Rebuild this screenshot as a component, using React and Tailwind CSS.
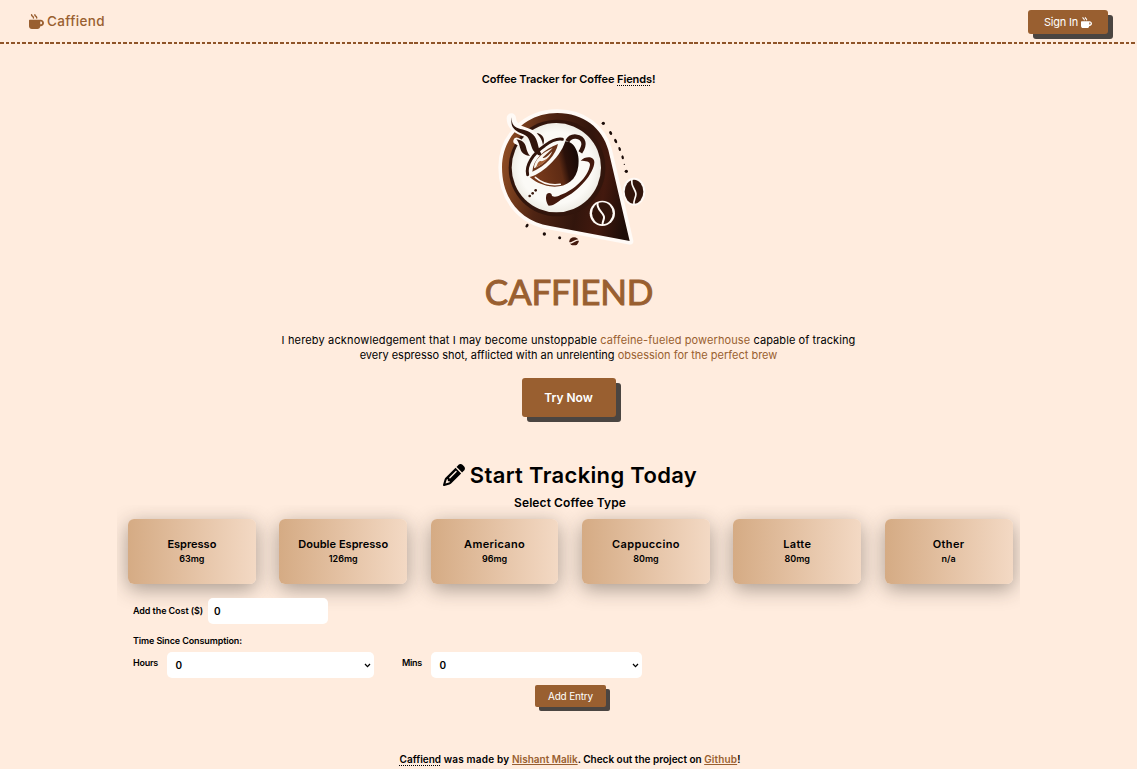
import { FaMugHot, FaPencil } from 'react-icons/fa6';

const coffees = [
  { name: 'Espresso', amount: '63mg', track: 'tracking-[0px]' },
  { name: 'Double Espresso', amount: '126mg', track: 'tracking-[0.04px]' },
  { name: 'Americano', amount: '96mg', track: 'tracking-[0.33px]' },
  { name: 'Cappuccino', amount: '80mg', track: 'tracking-[0.4px]' },
  { name: 'Latte', amount: '80mg', track: 'tracking-[0.33px]' },
  { name: 'Other', amount: 'n/a', track: 'tracking-[0.4px]' },
];

function Logo() {
  return (
    <svg className="h-[150px] w-[160px]" viewBox="60 120 480 450" fill="none">
      <defs>
        <linearGradient id="drop" x1="95" y1="330" x2="480" y2="400" gradientUnits="userSpaceOnUse">
          <stop offset="0" stopColor="#8b4a22" />
          <stop offset="0.3" stopColor="#4f2413" />
          <stop offset="0.62" stopColor="#32150c" />
          <stop offset="0.8" stopColor="#43190e" />
          <stop offset="1" stopColor="#1e0d08" />
        </linearGradient>
        <linearGradient id="cup" x1="190" y1="340" x2="325" y2="310" gradientUnits="userSpaceOnUse">
          <stop offset="0" stopColor="#7a3b1b" />
          <stop offset="0.6" stopColor="#5e2b14" />
          <stop offset="0.75" stopColor="#2b110a" />
          <stop offset="1" stopColor="#190a06" />
        </linearGradient>
        <radialGradient id="plate">
          <stop offset="0.8" stopColor="#fbfaf6" />
          <stop offset="1" stopColor="#efede6" />
        </radialGradient>
      </defs>
      <path d="M262 159C340 159 397 204 415 270L479 543L240 498C150 483 96 415 96 322C96 230 168 159 262 159Z" fill="url(#drop)" stroke="#fffaf6" strokeWidth="22" strokeLinejoin="round" />
      <path d="M262 159C340 159 397 204 415 270L479 543L240 498C150 483 96 415 96 322C96 230 168 159 262 159Z" fill="url(#drop)" />
      <circle cx="261" cy="324" r="145" fill="#32150c" />
      <circle cx="259" cy="323" r="134" fill="url(#plate)" />

      <path d="M124 174C124 205 152 211 180 222C200 232 196 262 206 278" stroke="#fffaf6" strokeWidth="28" strokeLinecap="round" />
      <path d="M140 243C162 249 158 266 174 280" stroke="#fffaf6" strokeWidth="20" strokeLinecap="round" />
      <path d="M126 172C117 206 142 216 160 223C180 231 180 250 187 266C194 280 205 287 220 289C204 271 206 253 198 236C189 217 170 211 151 207C134 203 123 194 126 172Z" fill="#32150c" />
      <path d="M139 238C150 250 148 265 156 277C163 285 172 288 180 287C168 274 171 263 164 251C158 242 149 239 139 238Z" fill="#32150c" />
      <path d="M200 219C219 222 227 238 219 255C216 238 210 231 200 219Z" fill="#32150c" />

      <path d="M179 351C207 347 269 298 286 244C311 243 331 278 325 318C320 365 281 385 240 379C213 374 193 364 179 351Z" fill="url(#cup)" />
      <path d="M173 344C166 315 190 280 224 257C243 243 262 235 277 238" stroke="#32150c" strokeWidth="9" strokeLinecap="round" />
      <path d="M187 335C189 298 222 268 264 252C258 284 227 318 187 335Z" fill="#6b3419" />
      <path d="M192 325C192 301 216 278 248 264C235 279 222 287 218 294C229 296 241 279 247 274C236 298 215 316 192 325Z" fill="#faf6ef" />
      <path d="M196 323C204 316 200 308 210 303C220 306 236 294 244 282C234 301 216 314 196 323Z" fill="#a66035" />
      <path d="M196 352C214 368 242 377 271 373" stroke="#fffaf6" strokeWidth="4.5" strokeLinecap="round" />
      <path d="M292 244C303 222 335 227 340 247C343 259 337 268 331 277" stroke="#32150c" strokeWidth="13" />
      <path d="M332 302C346 288 373 288 373 307C372 340 327 394 277 417C264 423 256 437 236 437C228 429 226 412 230 403C236 396 246 399 246 408C255 412 263 409 271 405C312 391 354 352 360 315C361 304 347 302 332 302Z" fill="#43190d" />

      <g fill="#3a1a0f">
        <circle cx="179" cy="408" r="4" />
        <circle cx="188" cy="400" r="4" />
        <circle cx="197" cy="391" r="4" />
      </g>
      <g fill="#1b0c08">
        <circle cx="400" cy="190" r="5" />
        <ellipse cx="422" cy="219" rx="4" ry="6" transform="rotate(-30 422 219)" />
        <ellipse cx="437" cy="243" rx="4" ry="7" transform="rotate(-25 437 243)" />
        <ellipse cx="449" cy="267" rx="3.5" ry="6" transform="rotate(-20 449 267)" />
        <ellipse cx="458" cy="292" rx="3.5" ry="6" transform="rotate(-15 458 292)" />
        <circle cx="463" cy="313" r="2" />
        <circle cx="469" cy="334" r="5" />
        <ellipse cx="171" cy="497" rx="4" ry="6" transform="rotate(35 171 497)" />
        <circle cx="223" cy="522" r="5" />
        <circle cx="269" cy="533" r="4.5" />
      </g>
      <ellipse cx="492" cy="395" rx="34" ry="42" fill="#fffaf6" />
      <ellipse cx="492" cy="395" rx="28" ry="36" fill="#32150c" />
      <path d="M486 357C480 382 503 391 497 408C494 418 490 425 492 434" stroke="#fffaf6" strokeWidth="5" />
      <circle cx="397" cy="460" r="38" fill="#fffaf6" />
      <ellipse cx="397" cy="460" rx="31" ry="33" fill="#32150c" />
      <path d="M383 427C378 451 405 459 402 474C400 485 396 488 398 495" stroke="#fffaf6" strokeWidth="6" />
      <ellipse cx="312" cy="544" rx="14" ry="12" fill="#43190d" />
      <path d="M296 549C310 551 312 538 329 540" stroke="#fff0e4" strokeWidth="4" />
    </svg>
  );
}

function Chevron() {
  return (
    <svg className="h-[5px] w-[7px]" viewBox="0 0 7 5" fill="none">
      <path d="M1 1L3.5 3.6L6 1" stroke="#000" strokeWidth="1.3" />
    </svg>
  );
}

function Select({ width }) {
  return (
    <button className={`flex h-[26px] items-center justify-between rounded-[5px] bg-white pr-[3px] pl-[8.5px] text-[10px] font-semibold ${width}`}>
      <span>0</span>
      <Chevron />
    </button>
  );
}

export default function App() {
  return (
    <div className="h-[769px] w-full overflow-hidden bg-[#ffecde] font-['Inter',sans-serif] text-black">
      <header className="flex h-11 flex-col">
        <div className="flex h-[42px] items-start justify-between px-[29px]">
          <div className="flex h-[42px] items-center gap-[3px] text-[#995f30]">
            <FaMugHot className="size-[15px]" />
            <span className="text-[13.5px] font-medium tracking-[0.36px]">Caffiend</span>
          </div>
          <button className="mt-2.5 flex h-6 w-20 items-center justify-center gap-[3px] rounded-[3px] bg-[#995f30] text-[11px] tracking-[-0.2px] text-white shadow-[5px_5px_0_#4b4541]">
            Sign In <FaMugHot className="size-[11px]" />
          </button>
        </div>
        <div className="h-0.5 w-full bg-[repeating-linear-gradient(90deg,#8f5428_0_3.7px,#ffecde_3.7px_5.6px)]" />
      </header>

      <main className="flex flex-col items-center">
        <p className="mt-[27px] h-4 text-[11px] leading-4 font-semibold tracking-[-0.1px]">
          Coffee Tracker for Coffee <span className="underline decoration-dotted decoration-1 underline-offset-2">Fiends</span>!
        </p>
        <div className="mt-[13px] w-[157px]"><Logo /></div>
        <h1 className="mt-[21px] h-10 pl-px font-['Lato',sans-serif] text-[35px] leading-10 font-normal tracking-[-0.2px] text-[#995f30] [-webkit-text-stroke:1px_#995f30]">CAFFIEND</h1>
        <div className="mt-[22px] text-center text-[11px] leading-[15px] whitespace-nowrap">
          <p>
            <span className="tracking-[0.15px]">I hereby acknowledgement that I may become unstoppable </span>
            <span className="tracking-[0.1px] text-[#995f30]">caffeine-fueled powerhouse</span>
            <span className="tracking-[0.08px]"> capable of tracking</span>
          </p>
          <p>
            <span className="tracking-[-0.02px]">every espresso shot, afflicted with an unrelenting </span>
            <span className="text-[#995f30]">obsession for the perfect brew</span>
          </p>
        </div>
        <button className="mt-[15px] h-[39px] w-[94px] rounded-[3px] bg-[#995f30] text-xs font-semibold text-white shadow-[5px_5px_0_#4b4541]">Try Now</button>

        <section className="mt-[42px] flex w-[903px] flex-col">
          <h2 className="flex h-8 items-center justify-center gap-[5px] pl-[3px] text-[22px] font-semibold tracking-[0.33px]">
            <FaPencil className="size-[22px]" />
            Start Tracking Today
          </h2>
          <h3 className="mt-1 h-4 pl-[3px] text-center text-xs leading-4 font-semibold tracking-[0.1px]">Select Coffee Type</h3>
          <div className="-mt-1.5 -mb-6 overflow-hidden px-[11px] pt-[14px] pb-[38px]">
            <div className="grid w-[884.5px] grid-cols-6 gap-[23.6px]">
              {coffees.map((c) => (
                <button key={c.name} className="flex h-[65px] flex-col items-center justify-center rounded-md bg-linear-to-r from-[#d5ab84] to-[#f3d9c4] font-semibold shadow-[0_5px_20px_rgba(45,38,32,0.42)]">
                  <span className={`-mt-px text-[11px] leading-[15px] whitespace-nowrap ${c.track}`}>{c.name}</span>
                  <span className="text-[9px] leading-[13px]">{c.amount}</span>
                </button>
              ))}
            </div>
          </div>
          <div className="relative flex h-[26px] items-center gap-[5px] pl-4">
            <label className="w-[70px] text-[9px] font-semibold tracking-[-0.08px] whitespace-nowrap">Add the Cost ($)</label>
            <div className="flex h-[26px] w-[120px] items-center rounded-[5px] bg-white pl-1.5 text-[10px] font-semibold">0</div>
          </div>
          <p className="mt-[11px] h-3 pl-4 text-[9px] leading-3 font-semibold tracking-[-0.12px]">Time Since Consumption:</p>
          <div className="mt-[5px] flex pl-4 text-[9px] font-semibold">
            <span className="mt-[5px] w-[34px] leading-3 tracking-[-0.24px]">Hours</span>
            <Select width="w-[207px]" />
            <span className="mt-[5px] ml-7 w-[29px] leading-3 tracking-[-0.27px]">Mins</span>
            <Select width="w-[211px]" />
          </div>
          <button className="mt-[7px] ml-[418px] h-[22px] w-[71px] rounded-[2px] bg-[#995f30] text-[10px] tracking-[-0.18px] text-white shadow-[4px_4px_0_#4b4541]">Add Entry</button>
        </section>

        <footer className="mt-[44px] pl-[3px] text-[10px] leading-4 font-semibold whitespace-pre">
          <span className="underline decoration-dotted decoration-1 underline-offset-2">Caffiend</span>
          <span className="tracking-[0.19px]"> was made by </span>
          <a className="text-[#995f30] underline">Nishant Malik</a>
          <span>. Check out the project on </span>
          <a className="tracking-[0.14px] text-[#995f30] underline">Github</a>!
        </footer>
      </main>
    </div>
  );
}
